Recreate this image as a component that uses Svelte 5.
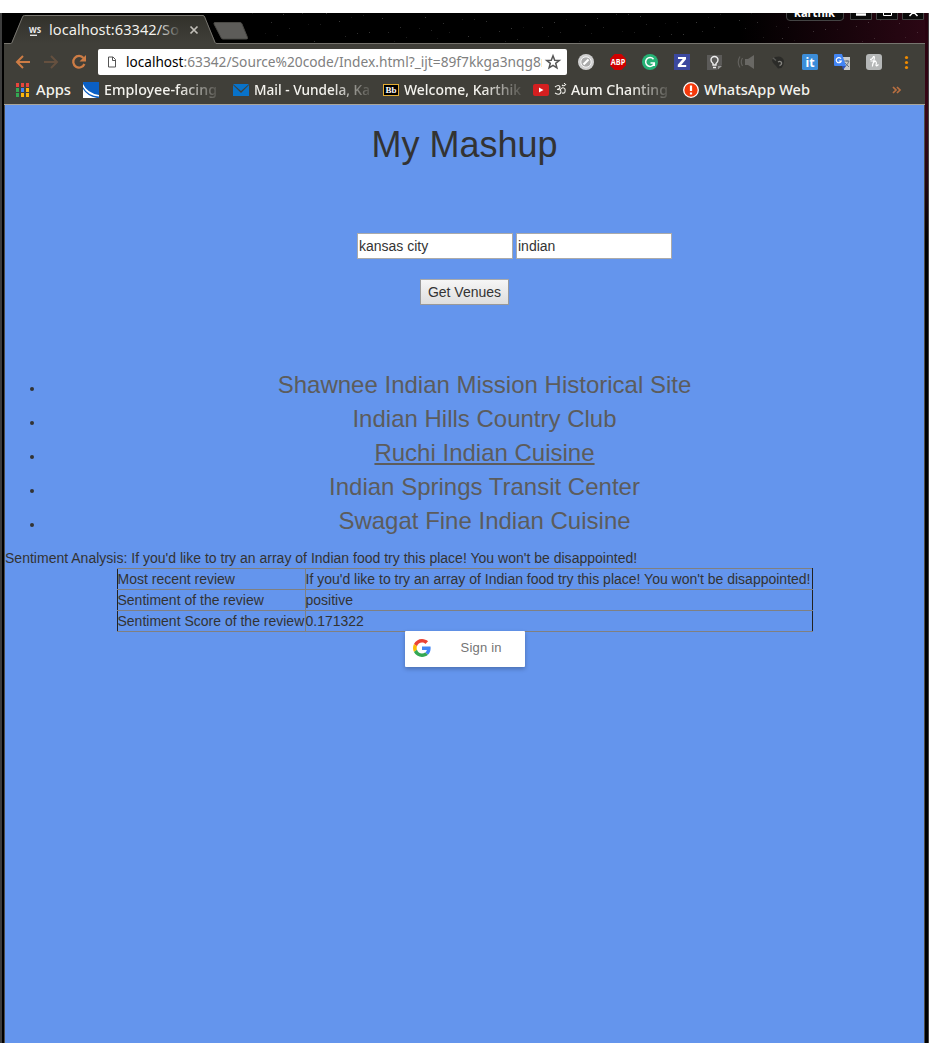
<script>
  const venues = ['Shawnee Indian Mission Historical Site', 'Indian Hills Country Club', 'Ruchi Indian Cuisine', 'Indian Springs Transit Center', 'Swagat Fine Indian Cuisine'];
  const review = "If you'd like to try an array of Indian food try this place! You won't be disappointed!";
  const stars = Array.from({ length: 90 }, (_, i) => ({ x: 252 + ((i * 197) % 671), y: (i * 47 + ((i * i) % 11)) % 29, o: 0.08 + (i % 5) * 0.035 }));
</script>

{#snippet label(text, width, fade)}
  <svg class="label" class:fade width={width} height="22">
    <text x="0" y="16" textLength={width} lengthAdjust="spacingAndGlyphs">{text}</text>
  </svg>
{/snippet}

<div class="desktop">
  <div class="left-edge"></div>
  <div class="window">
    <header class="chrome">
      <div class="tabs">
        <svg width="925" height="31" viewBox="0 13 925 31">
          <defs>
            <linearGradient id="tabfade" x1="158" x2="181" y1="0" y2="0" gradientUnits="userSpaceOnUse"><stop stop-color="#f4f3ee" /><stop offset="1" stop-color="#3d3c35" /></linearGradient>
            <linearGradient id="wine" x1="740" x2="925" y1="0" y2="0" gradientUnits="userSpaceOnUse"><stop stop-color="#000" /><stop offset="1" stop-color="#2b0714" /></linearGradient>
            <linearGradient id="tabbg" x1="0" x2="0" y1="15" y2="43" gradientUnits="userSpaceOnUse"><stop stop-color="#32312a" /><stop offset="1" stop-color="#403f39" /></linearGradient>
          </defs>
          <rect x="2" y="13" width="923" height="31" />
          <rect x="0" y="13" width="2" height="31" fill="#3d3d3d" />
          <rect x="740" y="13" width="185" height="30" fill="url(#wine)" />
          {#each stars as s}<rect x={s.x} y={s.y + 13} width="1" height="1" fill="#fff" opacity={s.o} />{/each}
          <rect x="900" y="48" width="1" height="1" fill="#fff" />
          <path d="M4 43.5H925" stroke="#77756f" />
          <path d="M4 44V43.500H11L23 15.500H204L216 43.500V44Z" fill="url(#tabbg)" />
          <path d="M4 43.500H10.500Q11.500 43.500 12 42.500L22.500 17Q23 15.500 24.500 15.500H203Q204 15.500 204.700 17L215 42.500Q215.500 43.500 217 43.500" fill="none" stroke="#77756f" />
          <path d="M215 22.500H240Q241.500 22.500 242 24L247.500 37.500Q248 39 246.500 39H223Q221.500 39 221 37.500L214 24Q213.500 22.500 215 22.500Z" fill="#5d5c59" stroke="#494844" />
          <text x="29" y="32.500" class="ws" textLength="12" lengthAdjust="spacingAndGlyphs">WS</text>
          <path d="M30 35.300H37" stroke="#eee" stroke-width="1.300" />
          <text x="49" y="35" class="ui" fill="url(#tabfade)" textLength="130" lengthAdjust="spacingAndGlyphs">localhost:63342/So</text>
          <path d="M190.500 26.500L197.500 33.500M197.500 26.500L190.500 33.500" stroke="#c2bfb8" stroke-width="1.700" />
          <path d="M786.500 13V17Q786.500 20.500 790 20.500H840Q843.500 20.500 843.500 17V13M850.500 13V19.500H871.500V13M876.500 13V19.500H897.500V13M902.500 13V19.500H923.500V13" fill="#090909" stroke="#444" />
          <text x="794" y="17" class="user" textLength="41" lengthAdjust="spacingAndGlyphs">karthik</text>
          <path d="M856 14.500H866" stroke="#fff" stroke-width="2.500" />
          <path d="M883.500 13V15.500H891.500V13" fill="none" stroke="#fff" />
          <path d="M909.500 16L913.500 12L917.500 16" fill="none" stroke="#fff" stroke-width="1.500" />
        </svg>
      </div>

      <div class="toolbar">
        <svg class="nav" width="94" height="36" viewBox="4 44 94 36" fill="none">
          <g stroke-width="2"><path d="M30 62H17M23 56L17 62L23 68" stroke="#cd7c45" /><path d="M44 62H57M51 56L57 62L51 68" stroke="#65503f" /></g>
          <path d="M83.500 58A5.800 5.800 0 1 0 84.400 64" stroke="#cd7c45" stroke-width="2.300" /><path d="M86 55V61.500H79.500Z" fill="#cd7c45" />
        </svg>
        <div class="address">
          <svg width="469" height="26" viewBox="98 49 469 26">
            <path d="M108.500 57H113L115.500 59.500V67H108.500ZM112.500 57V60.500H115.500" fill="none" stroke="#555" stroke-width="1" />
            <text x="126" y="67" class="ui" fill="#000" textLength="57.500" lengthAdjust="spacingAndGlyphs">localhost</text>
            <svg x="183.500" y="49" width="358.500" height="26"><text x="0" y="18" class="ui" fill="#808080" textLength="363" lengthAdjust="spacingAndGlyphs">:63342/Source%20code/Index.html?_ijt=89f7kkga3nqg8r</text></svg>
            <path d="M553 55.800L554.700 60.200L559.300 60.400L555.700 63.300L556.900 67.800L553 65.300L549.100 67.800L550.300 63.300L546.700 60.400L551.300 60.200Z" fill="none" stroke="#555" stroke-width="1.500" />
          </svg>
        </div>
        <svg class="ext" width="358" height="36" viewBox="567 44 358 36">
          <circle cx="586" cy="62" r="8" fill="#d0d0d0" /><circle cx="586" cy="62" r="5.200" fill="#aaa" stroke="#f5f5f5" /><path d="M583.500 64.500L588.500 59.500" stroke="#fff" stroke-width="2.200" />
          <path d="M614.700 54H621.300L626 58.700V65.300L621.300 70H614.700L610 65.300V58.700Z" fill="#cf0000" /><text x="610.800" y="65.300" class="abp" textLength="14.400" lengthAdjust="spacingAndGlyphs">ABP</text>
          <circle cx="650" cy="62" r="8" fill="#25b275" /><path d="M653.500 59.200A4.400 4.400 0 1 0 654.200 63.500M650.500 63H654.300V66" fill="none" stroke="#fff" stroke-width="1.500" />
          <rect x="674" y="54" width="16" height="16" fill="#3b489f" /><path d="M678 57H686V59.200L681.200 65H686.200V67H677.800V64.800L682.700 59H678Z" fill="#fff" />
          <path d="M707 55H722V65L717 70H707Z" fill="#5c5b59" /><path d="M718 69.500V66H722Z" fill="#999" /><path d="M713 65V63.500Q711 62 711 60A3.500 3.500 0 0 1 718 60Q718 62 716 63.500V65ZM713 67.500H716" fill="none" stroke="#eee" stroke-width="1.400" />
          <path d="M745 59H748L754 55V69L748 65H745Z" fill="#696864" /><path d="M742.500 58Q740 62 742.500 66M740 56.500Q736.500 62 740 67.500" fill="none" stroke="#62615d" stroke-width="1.200" />
          <path d="M772 60L775 57L779 56.500Q783 57 784 61Q784 65 781.500 68L778 68.500L776 66L774 64L772.500 62Z" fill="#2b2b28" /><path d="M778 62Q780 60.500 781.500 62.500Q782 65 779.500 65.500" fill="none" stroke="#85847f" stroke-width="1.300" /><path d="M773 58L776 60.500" stroke="#5b5b57" stroke-width="1.500" />
          <rect x="802" y="54" width="16" height="16" rx="1.500" fill="#3c8dd9" /><text x="805.500" y="66.500" class="it" textLength="9" lengthAdjust="spacingAndGlyphs">it</text>
          <path d="M841 57H850V70H844Z" fill="#c8cacb" /><path d="M844 61H849M847 60V62M849 61Q848 65 844 67M845 63L849 67" fill="none" stroke="#697785" /><path d="M835 54H842L846 66H835Q834 66 834 65V55Q834 54 835 54Z" fill="#4285f4" /><path d="M842 66H846L843 70Z" fill="#3053b5" /><path d="M841 58.700A2.600 2.600 0 1 0 841.300 61H838.800" fill="none" stroke="#fff" stroke-width="1.200" />
          <rect x="866" y="54" width="16" height="16" rx="3" fill="#b5b7b7" /><path d="M870 59.500Q872.500 59.500 873.500 56.500Q875 56 874 60L872.300 66.500M872.300 64.500Q874 61 875.500 61.500Q877 62 876 65Q876 67 878.500 64.500M870.500 61H876" fill="none" stroke="#fff" stroke-width="1.100" />
          <g fill="#f08b00"><circle cx="906.500" cy="57.500" r="1.600" /><circle cx="906.500" cy="62.500" r="1.600" /><circle cx="906.500" cy="67.500" r="1.600" /></g>
        </svg>
      </div>

      <div class="bookmarks">
        <div class="bm" style:width="68px">
          <svg width="16" height="16" viewBox="0 0 16 16" shape-rendering="crispEdges">
            <g fill="#e8453c"><rect x="1" y="1" width="3" height="4" /><rect x="6" y="1" width="3" height="4" /><rect x="11" y="1" width="3" height="4" /></g>
            <rect x="1" y="6" width="3" height="4" fill="#34a853" /><rect x="6" y="6" width="3" height="4" fill="#4285f4" /><rect x="11" y="6" width="3" height="4" fill="#fbb50b" />
            <rect x="1" y="11" width="3" height="4" fill="#34a853" /><rect x="6" y="11" width="3" height="4" fill="#fbb50b" /><rect x="11" y="11" width="3" height="4" fill="#fbb50b" />
          </svg>{@render label('Apps', 35, false)}
        </div>
        <div class="bm" style:width="150px">
          <svg width="16" height="16"><rect width="16" height="16" fill="#0a5fc4" /><path d="M0 2Q4 11 16 13V14.500Q5 14 0 5ZM0 7Q4 14 14 16H0Z" fill="#fff" /></svg>{@render label('Employee-facing', 113, true)}
        </div>
        <div class="bm" style:width="150px">
          <svg width="16" height="16"><path d="M0 2H16L8 9ZM0 3V14H16V3L8 11Z" fill="#0872c9" /></svg>{@render label('Mail - Vundela, Ka', 116, true)}
        </div>
        <div class="bm" style:width="150px">
          <svg width="16" height="16"><rect x=".5" y="2.500" width="15" height="11" fill="#000" stroke="#e4ad32" /><text x="2.500" y="11" class="bb" textLength="11" lengthAdjust="spacingAndGlyphs">Bb</text></svg>{@render label('Welcome, Karthik', 117, true)}
        </div>
        <div class="bm" style:width="150px">
          <svg width="16" height="16"><rect y="2" width="16" height="12" rx="2" fill="#d41f20" /><path d="M6 5.500V10.500L10.500 8Z" fill="#fff" /></svg>
          <svg class="label fade" width="114" height="22"><g fill="none" stroke="#f4f3ee" stroke-width="1.100"><path d="M1 8Q5 5 6 8Q6 10 3 10.500Q7 10 7 13Q6 17 1 14M6 11Q9 7 11 10Q12 15 8 14M8 6Q10 8 12 5" /><path d="M10.500 4V5" /></g><text x="17" y="16" textLength="97" lengthAdjust="spacingAndGlyphs">Aum Chanting</text></svg>
        </div>
        <div class="bm" style:width="209px">
          <svg width="16" height="16"><circle cx="8" cy="8" r="7.300" fill="#f6390b" stroke="#fff" stroke-width="1.300" /><path d="M8 3.500V9M8 10.500V12.500" stroke="#fff" stroke-width="2.200" /></svg>{@render label('WhatsApp Web', 106, false)}
        </div>
        <svg width="10" height="16" fill="none"><path d="M1 5L4 8L1 11M5 5L8 8L5 11" stroke="#b96f40" stroke-width="1.700" /></svg>
      </div>
    </header>

    <main>
      <h1>My Mashup</h1>
      <form onsubmit={(e) => e.preventDefault()}>
        <div class="fields"><input value="kansas city" /><input value="indian" /></div>
        <button class="get">Get Venues</button>
      </form>
      <ul>
        {#each venues as v, i}<li><a class:hover={i === 2}>{v}</a></li>{/each}
      </ul>
      <p>Sentiment Analysis: {review}</p>
      <table>
        <tbody>
          <tr><td>Most recent review</td><td>{review}</td></tr>
          <tr><td>Sentiment of the review</td><td>positive</td></tr>
          <tr><td>Sentiment Score of the review</td><td>0.171322</td></tr>
        </tbody>
      </table>
      <div class="signin">
        <svg width="18" height="18" viewBox="0 0 48 48"><path fill="#EA4335" d="M24 9.500c3.540 0 6.710 1.220 9.210 3.600l6.850-6.850C35.900 2.380 30.470 0 24 0 14.620 0 6.510 5.380 2.560 13.220l7.980 6.190C12.430 13.720 17.740 9.500 24 9.500z" /><path fill="#4285F4" d="M46.980 24.550c0-1.570-.15-3.090-.38-4.550H24v9.020h12.940c-.58 2.960-2.260 5.480-4.780 7.180l7.730 6c4.510-4.180 7.090-10.360 7.090-17.650z" /><path fill="#FBBC05" d="M10.530 28.590c-.48-1.450-.76-2.990-.76-4.590s.27-3.140.76-4.590l-7.980-6.190C.92 16.460 0 20.120 0 24c0 3.880.92 7.540 2.560 10.780l7.970-6.190z" /><path fill="#34A853" d="M24 48c6.480 0 11.930-2.130 15.890-5.810l-7.730-6c-2.150 1.450-4.920 2.300-8.160 2.300-6.260 0-11.570-4.220-13.470-9.910l-7.980 6.190C6.510 42.620 14.620 48 24 48z" /></svg>
        <span>Sign in</span>
      </div>
    </main>
  </div>
  <div class="right-edge"></div>
</div>

<style>
  :global(body) { margin: 0; background: #fff; }
  .desktop { box-sizing: border-box; width: 929px; height: 1056px; padding: 13px 0; display: flex; background: #fff; overflow: hidden; }
  .left-edge { width: 2px; background: #3d3d3d; flex: none; }
  .window { width: 923px; flex: none; background: #000; display: flex; flex-direction: column; }
  .right-edge { width: 4px; box-sizing: border-box; border-right: 1px solid #413e40; background: linear-gradient(#24020e 0, #3a0718 100px, #210611 170px, #000 230px); flex: none; }
  .tabs { height: 31px; margin-left: -2px; }
  svg { display: block; flex: none; }
  .ui { font: 15px "Noto Sans", sans-serif; }
  .ws { font: bold 9px "Noto Sans", sans-serif; fill: #eee; }
  .user { font: bold 12px "Noto Sans", sans-serif; fill: #fff; }
  .abp { font: bold 8.500px "Open Sans", sans-serif; fill: #fff; }
  .it { font: bold 12px "Noto Sans", sans-serif; fill: #fff; }
  .bb { font: bold 9px "Liberation Serif", serif; fill: #fff; }
  .toolbar { margin-left: 2px; height: 36px; background: #403f39; display: flex; align-items: center; }
  .address { height: 26px; background: #fff; border-radius: 2px; }
  .bookmarks { margin-left: 2px; box-sizing: border-box; height: 25px; padding-left: 11px; border-bottom: 1px solid #aaa69b; background: #403f39; display: flex; align-items: center; padding-bottom: 4px; }
  .bm { display: flex; align-items: center; gap: 5px; flex: none; }
  .label { overflow: visible; fill: #f4f3ee; font: 500 15px "Noto Sans", sans-serif; }
  .fade { mask-image: linear-gradient(to right, #000 calc(100% - 38px), rgba(0,0,0,.12)); }
  main { margin-left: 2px; box-sizing: border-box; flex: 1; border-left: 1px solid #4b4b4b; border-right: 1px solid #4b4b4b; background: #6495ed; color: #333; font: 14px/20px "Liberation Sans", Arial, sans-serif; display: flow-root; }
  h1 { margin: 20px 0 0; font-size: 36px; font-weight: 400; line-height: 39.600px; text-align: center; }
  form { margin-top: 68px; display: flex; flex-direction: column; align-items: center; gap: 20px; }
  .fields { display: flex; gap: 3px; padding-left: 100px; }
  input { box-sizing: border-box; width: 156px; height: 26px; border: 1px solid #aaa; padding: 0 1px; background: #fff; color: #333; font: inherit; outline: none; border-radius: 0; }
  .get { box-sizing: border-box; width: 89px; height: 26px; padding: 0; border: 1px solid #999; border-top-color: #aaa; border-radius: 0; background: linear-gradient(#f6f6f6, #dedede); color: #333; font: inherit; }
  ul { margin: 63px 0 10px; padding-left: 40px; list-style: disc; }
  li { height: 34px; line-height: 34px; text-align: center; }
  a { font-size: 24px; color: #5c5c5c; }
  .hover { text-decoration: underline; }
  p { margin: 0; letter-spacing: .01px; }
  table { width: 696px; margin: 0 auto; border-collapse: collapse; border-left: 1px solid #222; border-right: 1px solid #222; }
  td { padding: 0; border: 1px solid #808080; height: 20px; white-space: nowrap; }
  td:first-child { border-left-color: #222; width: 187px; }
  td:last-child { border-right-color: #222; }
  .signin { position: relative; box-sizing: border-box; width: 120px; height: 36px; margin: -1px auto 0; padding: 0 0 2px 8px; background: #fff; box-shadow: 0 2px 4px rgba(0,0,0,.25); border-radius: 1px; display: flex; align-items: center; gap: 30px; color: #757575; font-size: 13px; letter-spacing: .21px; }
</style>
